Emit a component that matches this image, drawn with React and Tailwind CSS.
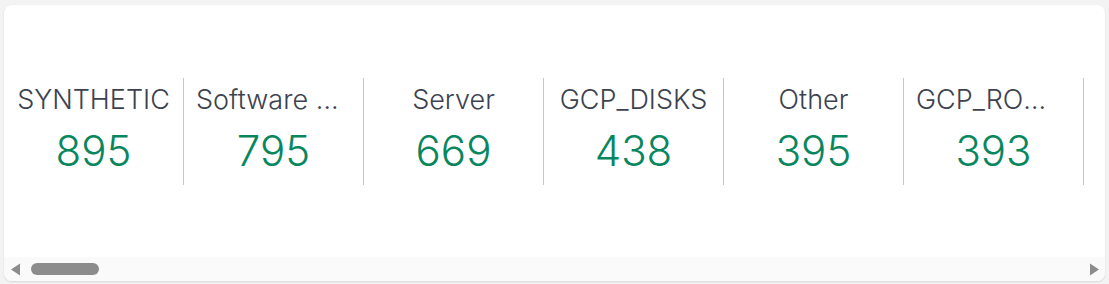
const stats = [
  { label: 'SYNTHETIC', value: 895 },
  { label: 'Software Licenses', value: 795 },
  { label: 'Server', value: 669 },
  { label: 'GCP_DISKS', value: 438 },
  { label: 'Other', value: 395 },
  { label: 'GCP_ROWS_MANAGED', value: 393 },
  { label: 'Storage', value: 351 },
  { label: 'Network', value: 287 },
];

function StatItem({ label, value }) {
  return (
    <div className="flex h-[107px] w-[180px] shrink-0 flex-col items-center justify-center border-r border-[#c6c6c6] px-3 pb-[3px]">
      <div className="w-full truncate text-center text-[27px] font-[350] leading-[32px] text-[#3c424e]">{label}</div>
      <div className="mt-[11px] text-center text-[42px] font-[350] leading-[48px] text-[#08875f]">{value}</div>
    </div>
  );
}

function Arrow({ dir }) {
  return (
    <svg width="11" height="13" viewBox="0 0 11 13" className="shrink-0">
      {dir === 'left'
        ? <path d="M10 0.5 L10 12.5 L1 6.5 Z" fill="#8c8c8c" />
        : <path d="M1 0.5 L1 12.5 L10 6.5 Z" fill="#8c8c8c" />}
    </svg>
  );
}

export default function App() {
  return (
    <div className="h-[284px] w-[1109px] bg-[#f3f3f3] pl-[4px] pr-[4px] pt-[5px] font-['Inter',sans-serif]">
      <div className="flex h-[276px] w-[1101px] flex-col overflow-hidden rounded-lg bg-white shadow-[0_1px_2px_rgba(0,0,0,0.12)]">
        <div className="flex h-[252px] items-center overflow-hidden">
          {stats.map((s) => (
            <StatItem key={s.label} label={s.label} value={s.value} />
          ))}
        </div>
        <div className="flex h-[24px] items-center bg-[#fafafa] pl-[6px] pr-[5px]">
          <Arrow dir="left" />
          <div className="ml-[10px] h-[12px] w-[68px] rounded-full bg-[#8c8c8c]" />
          <div className="flex-1" />
          <Arrow dir="right" />
        </div>
      </div>
    </div>
  );
}
